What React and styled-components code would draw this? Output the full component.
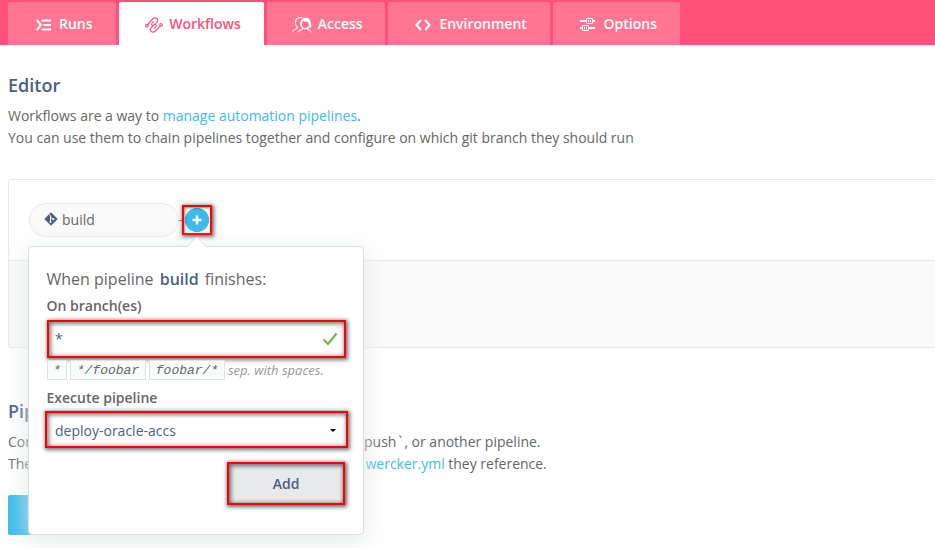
import React from "react";
import styled, { createGlobalStyle } from "styled-components";

const GlobalStyle = createGlobalStyle`
  * { box-sizing: border-box; }
  html, body { margin: 0; height: 548px; overflow: hidden; background: #fff; }
  body { font: 14px/22px "Open Sans", "Noto Sans", sans-serif; color: #666; }
  p, h2 { margin: 0; }
`;

const Page = styled.div`
  position: relative;
  height: 548px;
  overflow: hidden;
`;

const TabBar = styled.nav`
  display: flex;
  gap: 3px;
  height: 45px;
  padding: 2px 0 0 8px;
  background: #ff5078;
`;

const Tab = styled.a`
  display: flex;
  align-items: center;
  flex: none;
  width: ${(p) => p.$width}px;
  height: 43px;
  padding-left: ${(p) => p.$pad}px;
  border-radius: 2px 2px 0 0;
  background: ${(p) => (p.$active ? "#fff" : "#ff7593")};
  color: ${(p) => (p.$active ? "#ff5078" : "#fff")};
  font-weight: 600;

  svg { flex: none; margin-right: ${(p) => p.$gap}px; margin-top: 2px; }
`;

const Content = styled.main`
  padding-left: 8px;
`;

const Heading = styled.h2`
  padding-top: ${(p) => p.$top}px;
  font-size: 18px;
  line-height: 24px;
  font-weight: 600;
  color: #4c5f80;
`;

const Copy = styled.div`
  padding-top: ${(p) => p.$top}px;
  white-space: nowrap;
  letter-spacing: -0.01px;
`;

const Link = styled.a`
  color: #3dbbee;
`;

const Lead = styled.span`
  display: inline-block;
  width: ${(p) => p.$width}px;
  overflow: hidden;
  vertical-align: top;
`;

const Tick = styled.span`
  display: inline-block;
  width: 8px;
  text-align: center;
`;

const EditorCard = styled.section`
  height: 169px;
  width: 940px;
  margin-top: 30px;
  border: 1px solid #e6eaea;
  border-radius: 3px;
  background: #fafafa;
`;

const Canvas = styled.div`
  display: flex;
  align-items: flex-start;
  height: 81px;
  padding: 23px 0 0 20px;
  border-bottom: 1px solid #e6eaea;
  background: #fff;
`;

const Pill = styled.div`
  display: flex;
  align-items: center;
  width: 150px;
  height: 34px;
  padding-left: 14px;
  border: 1px solid #e6eaea;
  border-radius: 17px;
  background: #fafafa;
  color: #666;

  svg { margin: -2px 4px 0 0; }
`;

const Connector = styled.div`
  width: 3px;
  height: 1px;
  margin-top: 17px;
  background: #999;
`;

const AddStep = styled.button`
  display: flex;
  align-items: center;
  justify-content: center;
  width: 30px;
  height: 30px;
  margin-top: 2px;
  padding: 0;
  border: 2px solid #f00;
  background: radial-gradient(circle at center, #3bbbec 11.7px, #fff 12.4px);
  box-shadow: 1px 1px 4px 1px rgba(0, 0, 0, 0.6), inset 1px 1px 3px rgba(0, 0, 0, 0.45);
`;

const PrimaryButton = styled.button`
  display: block;
  width: 160px;
  height: 40px;
  margin-top: 20px;
  border: 0;
  border-radius: 2px;
  background: #3dbbee;
`;

const Popover = styled.div`
  position: absolute;
  left: 28px;
  top: 246px;
  width: 336px;
  height: 289px;
  padding: 20px 15px 0 16px;
  border: 1px solid #d9dede;
  border-radius: 4px;
  background: #fff;
  box-shadow: 0 5px 25px rgba(226, 231, 230, 0.95);
`;

const Arrow = styled.svg`
  position: absolute;
  left: 156px;
  top: -11px;
`;

const Title = styled.div`
  padding-left: 1.5px;
  font-size: 16px;
  line-height: 24px;
  white-space: nowrap;

  strong { margin: 0 2px; font-weight: 600; color: #4c5f80; }
`;

const Label = styled.div`
  padding-left: 1.5px;
  margin-top: ${(p) => p.$top}px;
  font-weight: 600;
  line-height: 22px;
`;

const Field = styled.div`
  display: flex;
  align-items: center;
  justify-content: space-between;
  width: ${(p) => p.$width}px;
  height: ${(p) => p.$height}px;
  margin: ${(p) => p.$margin};
  padding: ${(p) => p.$padding};
  border: 2px solid #f00;
  background: #fff;
  color: #4c5f80;
  box-shadow: 1px 1px 4px 1px rgba(0, 0, 0, 0.55), inset 1px 1px 4px 1px rgba(0, 0, 0, 0.5);
`;

const Hints = styled.div`
  display: flex;
  align-items: center;
  gap: 3px;
  height: 20px;
  margin: 2px 0 0 2px;
  font-size: 13px;
  line-height: 20px;
  font-style: italic;
  color: #999;
  white-space: nowrap;
`;

const Code = styled.code`
  width: ${(p) => p.$width}px;
  height: 20px;
  border: 1px solid #dce4e2;
  background: #f9fbfa;
  color: #666;
  font: italic 13px/19px "Liberation Mono", monospace;
  text-align: center;
`;

const AddButton = styled.button`
  display: block;
  width: 118px;
  height: 43px;
  margin: 14px 0 0 182px;
  padding: 0;
  border: 2px solid #f00;
  background: #e6eaea;
  color: #4c5f80;
  font: 600 14px/38px "Open Sans", sans-serif;
  box-shadow: 1px 1px 4px 1px rgba(0, 0, 0, 0.6), inset 1px 1px 4px 1px rgba(0, 0, 0, 0.55);
`;

const RunsIcon = () => (
  <svg width="15" height="12" viewBox="0 0 15 12" fill="none" stroke="currentColor" strokeWidth="2">
    <path d="M.8 1 5 6 .8 11M5.5 1.5H15M7.5 6H15M5.5 10.5H15" />
  </svg>
);

const WorkflowIcon = () => (
  <svg width="18" height="16" viewBox="0 0 18 16" fill="none" stroke="currentColor" strokeWidth="1.2">
    <circle cx="1.9" cy="8.6" r="1.3" />
    <circle cx="16.1" cy="7.8" r="1.3" />
    <path d="M2.8 7.5 7.6 2Q9.6 0 11.8 1.5 13.6 3.4 12 5.2L9.6 7.8" />
    <path d="M15.2 8.9 10.4 14Q8.4 16 6.2 14.5 4.4 12.6 6 10.8L8.4 8.2" />
    <path d="M8.6 4.4 7 6.2Q6 7.6 7.4 8.6L9.6 7.8M9.4 11.6 11 9.8Q12 8.4 10.6 7.4L8.4 8.2" />
  </svg>
);

const AccessIcon = () => (
  <svg width="20" height="16" viewBox="0 0 20 16" fill="none" stroke="currentColor" strokeWidth="1.1">
    <path d="M.5 14.7Q1 13 4.5 11.8 5.8 11.2 4.7 9.7 3.2 8 3.6 4 4.1 1 7.5.8L10 .5M6 15.3Q7 13.4 10.2 12.3 11.1 11.7 10.2 10.3 8.6 9 8.7 5.5M16.5 10.5Q15 12.1 16.5 12.8 19 13.6 19.3 15.3" />
    <path d="M8.6 5Q9.4 1.2 13 1 14 .4 15 .4 17.8 1 18.4 4 19.2 6.5 19.4 10.2L17 10.6Q17.4 6.6 15.4 4.8 13 4.4 11.3 4 9.8 4.8 9.8 8.5L9 8.5Z" fill="currentColor" stroke="none" />
    <path d="M10 10.4Q13.3 13.6 16.7 9.7" />
  </svg>
);

const CodeIcon = () => (
  <svg width="16" height="12" viewBox="0 0 16 12" fill="none" stroke="currentColor" strokeWidth="2.1">
    <path d="M5.9 1 1.5 6l4.4 5M10.1 1l4.4 5-4.4 5" />
  </svg>
);

const OptionsIcon = () => (
  <svg width="15" height="13" viewBox="0 0 15 13" fill="none" stroke="currentColor">
    <path d="M0 3h6M13 3h2M0 10h2M9 10h6" strokeWidth="2" />
    <rect x="6.5" y=".5" width="6" height="5" rx=".6" />
    <rect x="2.5" y="7.5" width="6" height="5" rx=".6" />
    <path d="M8.5 2v2M10.5 2v2M4.5 9v2M6.5 9v2" />
  </svg>
);

const GitIcon = () => (
  <svg width="14" height="14" viewBox="0 0 14 14">
    <path d="M7 .3 13.7 7 7 13.7.3 7Z" fill="#4c5f80" />
    <path d="M5.2 2.4 6.5 4v6M6.5 5.2l3 2.1" fill="none" stroke="#fafafa" strokeWidth="1" />
    <circle cx="6.5" cy="10" r="1" fill="#fafafa" />
    <circle cx="9.4" cy="7.3" r="1" fill="#fafafa" />
  </svg>
);

export default function App() {
  return (
    <Page>
      <GlobalStyle />
      <TabBar>
        <Tab $width={108} $pad={27.5} $gap={8.5}><RunsIcon />Runs</Tab>
        <Tab $width={145} $pad={26} $gap={6.2} $active><WorkflowIcon />Workflows</Tab>
        <Tab $width={118} $pad={25} $gap={5.8}><AccessIcon />Access</Tab>
        <Tab $width={162} $pad={27} $gap={8.4}><CodeIcon />Environment</Tab>
        <Tab $width={127} $pad={27} $gap={8.6}><OptionsIcon />Options</Tab>
      </TabBar>
      <Content>
        <Heading $top={28}>Editor</Heading>
        <Copy $top={8}>
          <p>Workflows are a way to <Link>manage automation pipelines</Link>.</p>
          <p>You can use them to chain pipelines together and configure on which git branch they should run</p>
        </Copy>
        <EditorCard>
          <Canvas>
            <Pill><GitIcon />build</Pill>
            <Connector />
            <AddStep aria-label="Add pipeline">
              <svg width="10" height="10" viewBox="0 0 10 10" stroke="#fff" strokeWidth="2.4">
                <path d="M5 .5v9M.5 5h9" />
              </svg>
            </AddStep>
          </Canvas>
        </EditorCard>
        <Heading $top={51}>Pipelines</Heading>
        <Copy $top={8}>
          <p><Lead $width={356}>Configure</Lead>push<Tick>`</Tick>, or another pipeline.</p>
          <p><Lead $width={357.5}>These</Lead><Link>wercker.yml</Link> they reference.</p>
        </Copy>
        <PrimaryButton aria-label="Add new pipeline" />
      </Content>
      <Popover>
        <Arrow width="24" height="12" viewBox="0 0 24 12">
          <path d="M1 11.5 11.5 1 22 11.5" fill="#fff" stroke="#d9dede" />
        </Arrow>
        <Title>When pipeline <strong>build</strong> finishes:</Title>
        <Label $top={4}>On branch(es)</Label>
        <Field $width={299} $height={38} $margin="3px 0 0 2px" $padding="0 6px 1px 6px">
          *
          <svg width="16" height="14" viewBox="0 0 16 14" fill="none" stroke="#62bd3c" strokeWidth="2">
            <path d="M1.5 7.5 6 12 14.5 1.5" />
          </svg>
        </Field>
        <Hints>
          <Code $width={20}>*</Code>
          <Code $width={76}>*/foobar</Code>
          <Code $width={76}>foobar/*</Code>
          sep. with spaces.
        </Hints>
        <Label $top={7}>Execute pipeline</Label>
        <Field $width={303} $height={37} $margin="2px 0 0 0" $padding="2px 10px 0 8px">
          deploy-oracle-accs
          <svg width="6" height="3" viewBox="0 0 6 3"><path d="M0 0h6L3 3Z" fill="#000" /></svg>
        </Field>
        <AddButton>Add</AddButton>
      </Popover>
    </Page>
  );
}
